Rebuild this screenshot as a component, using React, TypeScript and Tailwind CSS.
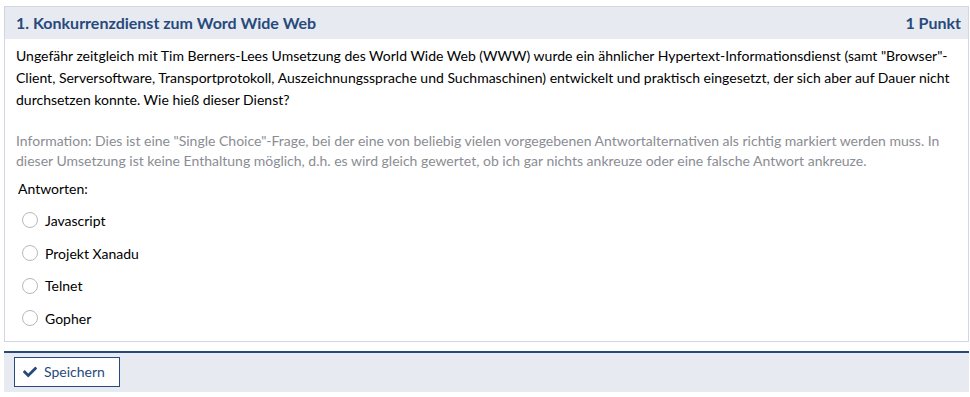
import { FaCheck } from "react-icons/fa";

const answers = ["Javascript", "Projekt Xanadu", "Telnet", "Gopher"];

export default function App() {
  return (
    <div className="pt-[6px] pl-[4px] pr-[1px] bg-white font-['Lato',sans-serif] text-[14px] text-[#1f1f1f]">
      <section className="border border-[#d0d7e3]">
        <header className="h-[32px] bg-[#e7ebf1] flex items-center justify-between pl-[11px] pr-[7px] text-[16px] font-bold text-[#28497c]">
          <span>1. Konkurrenzdienst zum Word Wide Web</span>
          <span>1 Punkt</span>
        </header>
        <div className="px-[11px] pt-[6px] pb-[6px]">
          <p className="leading-[22px] text-black">
            Ungefähr zeitgleich mit Tim Berners-Lees Umsetzung des World Wide Web (WWW) wurde ein ähnlicher
            Hypertext-Informationsdienst (samt "Browser"-Client, Serversoftware, Transportprotokoll,
            Auszeichnungssprache und Suchmaschinen) entwickelt und praktisch eingesetzt, der sich aber auf Dauer
            nicht durchsetzen konnte. Wie hieß dieser Dienst?
          </p>
          <p className="mt-[20px] leading-[20px] text-[#8a8d93]">
            Information: Dies ist eine "Single Choice"-Frage, bei der eine von beliebig vielen vorgegebenen
            Antwortalternativen als richtig markiert werden muss. In dieser Umsetzung ist keine Enthaltung möglich,
            d.h. es wird gleich gewertet, ob ich gar nichts ankreuze oder eine falsche Antwort ankreuze.
          </p>
          <div className="mt-[7px] pl-[2px] leading-[22px] text-black">Antworten:</div>
          <ul className="mt-[4px]">
            {answers.map((a) => (
              <li key={a} className="h-[32.7px] flex items-center pl-[6px] gap-[7px] text-black">
                <span className="w-[16px] h-[16px] rounded-full border border-[#b9b9b9] bg-white" />
                <span>{a}</span>
              </li>
            ))}
          </ul>
        </div>
      </section>
      <footer className="mt-[9px] border-t-2 border-[#28497c] bg-[#e7ebf1] pt-[4px] pb-[5px] pl-[10px]">
        <button className="h-[30px] w-[106px] flex items-center gap-[7px] pl-[8px] border border-[#28497c] bg-white text-[#28497c] text-[14px]">
          <FaCheck className="w-[14px] h-[14px]" />
          <span>Speichern</span>
        </button>
      </footer>
    </div>
  );
}
